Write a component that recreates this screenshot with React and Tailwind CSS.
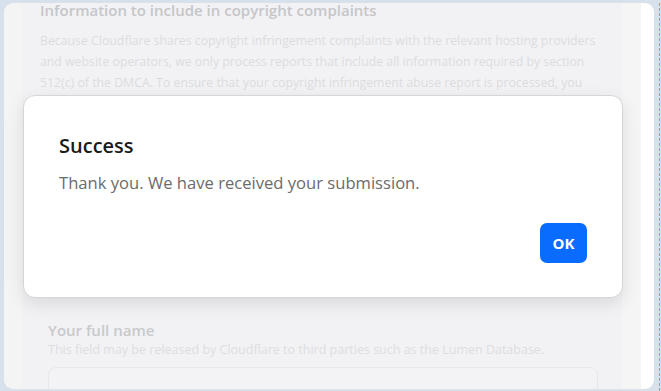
import React from 'react'

const font = { fontFamily: '"Open Sans", "Noto Sans", sans-serif' }

const Background = () => {
  return (
    <div className="flex h-[386px] w-[650px] overflow-hidden rounded-[9px]">
      <div className="w-[18px] bg-[#f4f4f5]" />
      <div className="w-[600px] bg-[#f2f2f4]">
        <div className="pl-[18px]">
          <h2 className="text-[15px] leading-[14px] font-semibold text-[#c6c6c9]">
            Information to include in copyright complaints
          </h2>
          <p className="mt-[13px] text-[12.3px] leading-[21px] text-[#dcdcdf] whitespace-nowrap">
            Because Cloudflare shares copyright infringement complaints with the relevant hosting providers
            <br />
            and website operators, we only process reports that include all information required by section
            <br />
            512(c) of the DMCA. To ensure that your copyright infringement abuse report is processed, you
          </p>
        </div>
        <div className="pl-[26px] pr-[24px] mt-[227px]">
          <div className="text-[15px] leading-[20px] font-semibold text-[#c9c9cc]">Your full name</div>
          <div className="mt-px text-[12.5px] leading-[18px] text-[#dddde0] whitespace-nowrap">
            This field may be released by Cloudflare to third parties such as the Lumen Database.
          </div>
          <div className="mt-2 h-[44px] rounded-lg border border-[#e8e8ea] bg-[#f3f3f5]" />
        </div>
      </div>
      <div className="w-[19px] bg-[#f5f5f6]" />
      <div className="flex-1 bg-white" />
    </div>
  )
}

const Modal = () => {
  return (
    <div className="absolute left-[23px] top-[95px] w-[600px] rounded-xl border border-[#d6d6d8] bg-white pt-9 pb-[34px] px-[35px] shadow-[0_6px_18px_rgba(0,0,0,0.10)]">
      <h3 className="text-[20px] leading-[28px] font-semibold text-[#1b1b1b]">Success</h3>
      <p className="mt-[11px] text-[16.6px] leading-[24px] text-[#6b6b6b]">
        Thank you. We have received your submission.
      </p>
      <div className="mt-[28px] flex justify-end">
        <button className="h-10 w-[47px] rounded-[7px] bg-[#0a6cff] text-[15px] font-bold text-white">
          OK
        </button>
      </div>
    </div>
  )
}

const App = () => {
  return (
    <div style={font} className="relative flex h-[391px] w-[661px] overflow-hidden bg-[#d6e1eb] pl-[4px] pt-[3px]">
      <Background />
      <div className="ml-[5px] h-full w-px border-l border-dashed border-[#c9935e]" />
      <Modal />
    </div>
  )
}

export default App
